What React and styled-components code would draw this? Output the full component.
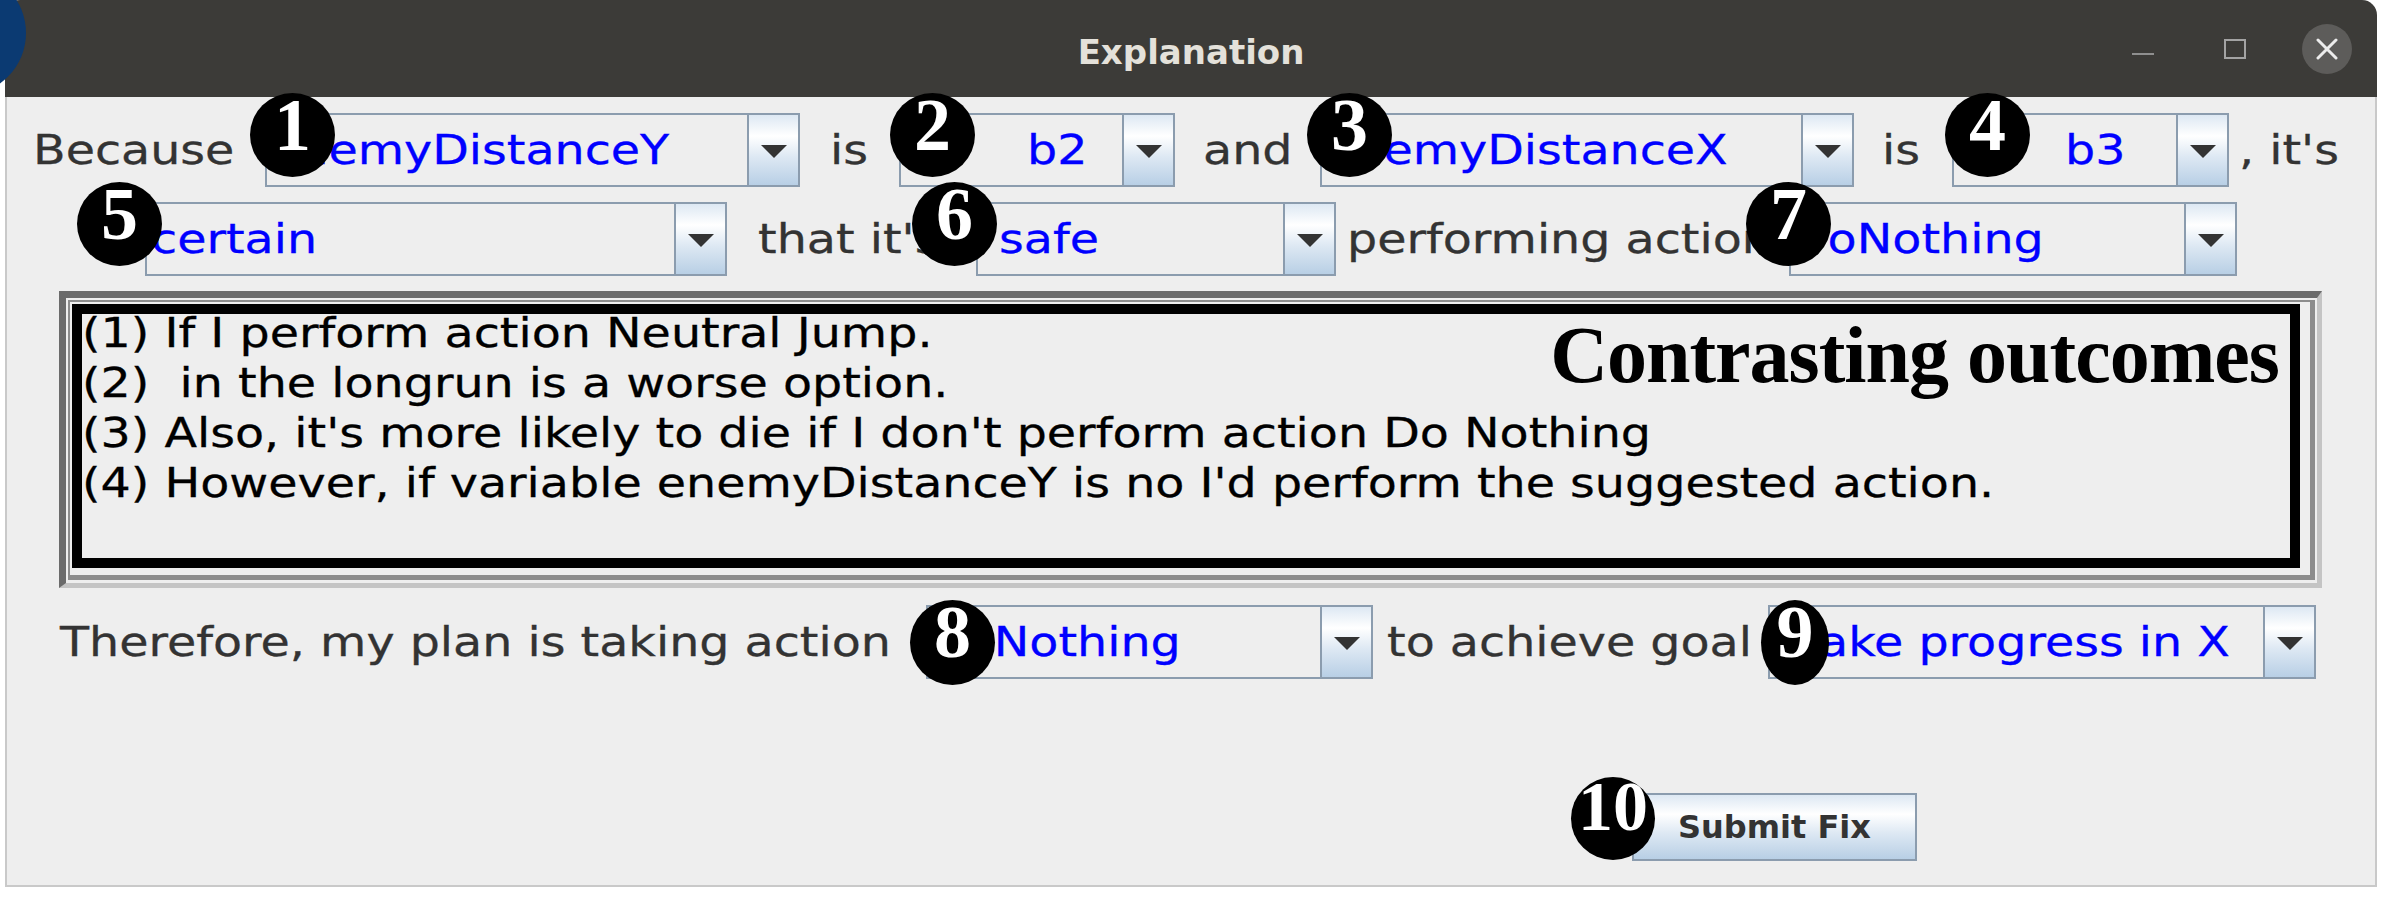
import React from "react";
import styled, { createGlobalStyle } from "styled-components";

const GlobalStyle = createGlobalStyle`
  html, body { margin: 0; padding: 0; background: #ffffff; }
  body {
    width: 2389px;
    height: 901px;
    overflow: hidden;
    font-family: "DejaVu Sans", Verdana, sans-serif;
  }
  * { box-sizing: border-box; }
`;

const Page = styled.div`
  position: relative;
  width: 2389px;
  height: 901px;
  padding-left: 5px;
  overflow: hidden;
  background: #ffffff;
`;

const CornerMark = styled.div`
  position: absolute;
  left: -98px;
  top: -29px;
  width: 124px;
  height: 124px;
  border-radius: 50%;
  background: #0b3a72;
  z-index: 5;
`;

const Window = styled.div`
  width: 2372px;
  display: flex;
  flex-direction: column;
`;

const TitleBar = styled.div`
  height: 97px;
  background: #3c3b38;
  border-radius: 15px 15px 0 0;
  display: grid;
  grid-template-columns: 1fr auto 1fr;
  align-items: center;
`;

const Title = styled.div`
  grid-column: 2;
  font-family: "DejaVu Sans", sans-serif;
  font-weight: bold;
  font-size: 34px;
  color: #e4e1da;
  padding-top: 6px;
`;

const Controls = styled.div`
  grid-column: 3;
  justify-self: end;
  display: flex;
  align-items: center;
  padding-right: 25px;
`;

const MinIcon = styled.div`
  width: 22px;
  height: 2px;
  background: #8f8f8f;
  margin-top: 11px;
`;

const MaxIcon = styled.div`
  width: 22px;
  height: 20px;
  border: 2px solid #a3a3a3;
  margin-left: 70px;
`;

const CloseButton = styled.div`
  width: 50px;
  height: 50px;
  border-radius: 50%;
  background: #5d5c5a;
  margin-left: 56px;
  display: flex;
  align-items: center;
  justify-content: center;
`;

const Body = styled.div`
  height: 790px;
  background: #eeeeee;
  border: 2px solid #c9c9c9;
  border-top: none;
  display: flex;
  flex-direction: column;
`;

const Row = styled.div`
  display: flex;
  align-items: center;
  height: 74px;
  flex: none;
  margin-top: ${(p) => p.$mt}px;
  padding-left: ${(p) => p.$pl}px;
`;

/* The captured dialog is drawn wider than its font: the text is stretched horizontally. */
const stretchedText = `
  font-family: "DejaVu Sans", sans-serif;
  font-size: 41px;
  -webkit-text-stroke: 0.3px currentColor;
  transform: scaleX(1.16);
  white-space: nowrap;
`;

const Label = styled.span`
  flex: none;
  display: inline-block;
  ${stretchedText}
  transform-origin: left center;
  color: #333333;
  margin-left: ${(p) => p.$ml || 0}px;
  width: ${(p) => (p.$w ? `${p.$w}px` : "auto")};
`;

const ComboBox = styled.div`
  position: relative;
  flex: none;
  width: ${(p) => p.$w}px;
  height: 74px;
  border: 2px solid #8b9cae;
  background: #eeeeee;
  display: flex;
`;

const ComboValue = styled.div`
  flex: 1;
  min-width: 0;
  overflow: hidden;
  display: flex;
  align-items: center;
  padding-left: ${(p) => p.$pl}px;
`;

const ComboText = styled.span`
  display: inline-block;
  ${stretchedText}
  transform-origin: left center;
  color: #0000ff;
`;

const oceanGradient = `linear-gradient(to bottom, #dde8f3 0%, #ffffff 30%, #dde8f3 60%, #b8cfe5 100%)`;

const ArrowButton = styled.div`
  flex: none;
  width: 51px;
  border-left: 2px solid #8b9cae;
  background: ${oceanGradient};
  display: flex;
  align-items: center;
  justify-content: center;
`;

const Arrow = styled.div`
  width: 0;
  height: 0;
  border-left: 13px solid transparent;
  border-right: 13px solid transparent;
  border-top: 13px solid #333333;
  margin-top: 3px;
`;

const Badge = styled.div`
  position: absolute;
  left: ${(p) => p.$x}px;
  top: ${(p) => p.$y}px;
  width: ${(p) => p.$bw || 85}px;
  height: ${(p) => p.$bh || 84}px;
  border-radius: 50%;
  background: #000000;
  color: #ffffff;
  font-family: "Liberation Serif", "Times New Roman", serif;
  font-weight: bold;
  font-size: ${(p) => p.$fs || 74}px;
  line-height: ${(p) => p.$lh || 64}px;
  text-align: center;
  z-index: 2;
`;

const Frame = styled.div`
  flex: none;
  width: 2263px;
  height: 297px;
  margin: 15px 0 0 52px;
  border-style: solid;
  border-width: 7px 5px 5px 7px;
  border-color: #6b6b6b #c4c4c4 #c4c4c4 #6b6b6b;
  padding: 2px 2px 3px 2px;
  display: flex;
`;

const Bevel = styled.div`
  flex: 1;
  display: flex;
  border-style: solid;
  border-width: 2px 5px 5px 2px;
  border-color: #8c8c8c;
  padding: 2px 10px 7px 2px;
`;

const TextBox = styled.div`
  position: relative;
  flex: 1;
  border: 10px solid #000000;
  background: #eeeeee;
  overflow: hidden;
`;

const Lines = styled.div`
  margin-top: -6px;
  ${stretchedText}
  transform-origin: left top;
  white-space: pre;
  line-height: 50px;
  color: #000000;
`;

const Heading = styled.div`
  position: absolute;
  right: 11px;
  top: 1px;
  font-family: "Liberation Serif", "Times New Roman", serif;
  font-weight: bold;
  font-size: 80px;
  letter-spacing: -1px;
  line-height: 80px;
  color: #000000;
`;

const ButtonRow = styled.div`
  display: flex;
  flex: none;
  margin-top: 114px;
  padding-left: 1625px;
`;

const SubmitButton = styled.div`
  position: relative;
  width: 285px;
  height: 68px;
  border: 2px solid #8b9cae;
  background: ${oceanGradient};
  display: flex;
  align-items: center;
  justify-content: center;
  font-family: "DejaVu Sans", sans-serif;
  font-weight: bold;
  font-size: 32px;
  color: #333333;
`;

function Combo({ w, value, pl = 3, badge }) {
  return (
    <ComboBox $w={w}>
      <ComboValue $pl={pl}>
        <ComboText>{value}</ComboText>
      </ComboValue>
      <ArrowButton>
        <Arrow />
      </ArrowButton>
      {badge && (
        <Badge $x={badge.x} $y={badge.y} $bw={badge.w} $bh={badge.h}>
          {badge.n}
        </Badge>
      )}
    </ComboBox>
  );
}

const lines = [
  "(1) If I perform action Neutral Jump.",
  "(2)  in the longrun is a worse option.",
  "(3) Also, it's more likely to die if I don't perform action Do Nothing",
  "(4) However, if variable enemyDistanceY is no I'd perform the suggested action.",
];

export default function App() {
  return (
    <>
      <GlobalStyle />
      <Page>
        <CornerMark />
        <Window>
          <TitleBar>
            <Title>Explanation</Title>
            <Controls>
              <MinIcon />
              <MaxIcon />
              <CloseButton>
                <svg width="22" height="22" viewBox="0 0 22 22">
                  <path d="M2 2 L20 20 M20 2 L2 20" stroke="#ececec" strokeWidth="3" strokeLinecap="round" />
                </svg>
              </CloseButton>
            </Controls>
          </TitleBar>
          <Body>
            <Row $mt={16} $pl={26}>
              <Label $w={232}>Because</Label>
              <Combo w={535} value="enemyDistanceY" pl={2} badge={{ n: "1", x: -17, y: -22 }} />
              <Label $ml={30} $w={69}>is</Label>
              <Combo w={276} value="b2" pl={126} badge={{ n: "2", x: -11, y: -22 }} />
              <Label $ml={28} $w={117}>and</Label>
              <Combo w={534} value="enemyDistanceX" pl={2} badge={{ n: "3", x: -15, y: -22 }} />
              <Label $ml={28} $w={70}>is</Label>
              <Combo w={277} value="b3" pl={111} badge={{ n: "4", x: -9, y: -22 }} />
              <Label $ml={10}>, it's</Label>
            </Row>
            <Row $mt={15} $pl={138}>
              <Combo w={582} value="certain" pl={4} badge={{ n: "5", x: -70, y: -22 }} />
              <Label $ml={31} $w={218}>that it's</Label>
              <Combo w={360} value="safe" pl={21} badge={{ n: "6", x: -66, y: -22 }} />
              <Label $ml={11} $w={442}>performing action</Label>
              <Combo w={448} value="DoNothing" pl={0} badge={{ n: "7", x: -45, y: -22 }} />
            </Row>
            <Frame>
              <Bevel>
                <TextBox>
                  <Lines>
                    {lines.map((l) => (
                      <div key={l}>{l}</div>
                    ))}
                  </Lines>
                  <Heading>Contrasting outcomes</Heading>
                </TextBox>
              </Bevel>
            </Frame>
            <Row $mt={17} $pl={53}>
              <Label $w={866}>Therefore, my plan is taking action</Label>
              <Combo w={447} value="DoNothing" pl={0} badge={{ n: "8", x: -18, y: -7, h: 85 }} />
              <Label $ml={14} $w={381}>to achieve goal</Label>
              <Combo w={548} value="Make progress in X" pl={8} badge={{ n: "9", x: -9, y: -7, w: 68, h: 85 }} />
            </Row>
            <ButtonRow>
              <SubmitButton>
                Submit Fix
                <Badge $x={-63} $y={-18} $bw={84} $bh={83} $fs={70} $lh={59}>
                  10
                </Badge>
              </SubmitButton>
            </ButtonRow>
          </Body>
        </Window>
      </Page>
    </>
  );
}
